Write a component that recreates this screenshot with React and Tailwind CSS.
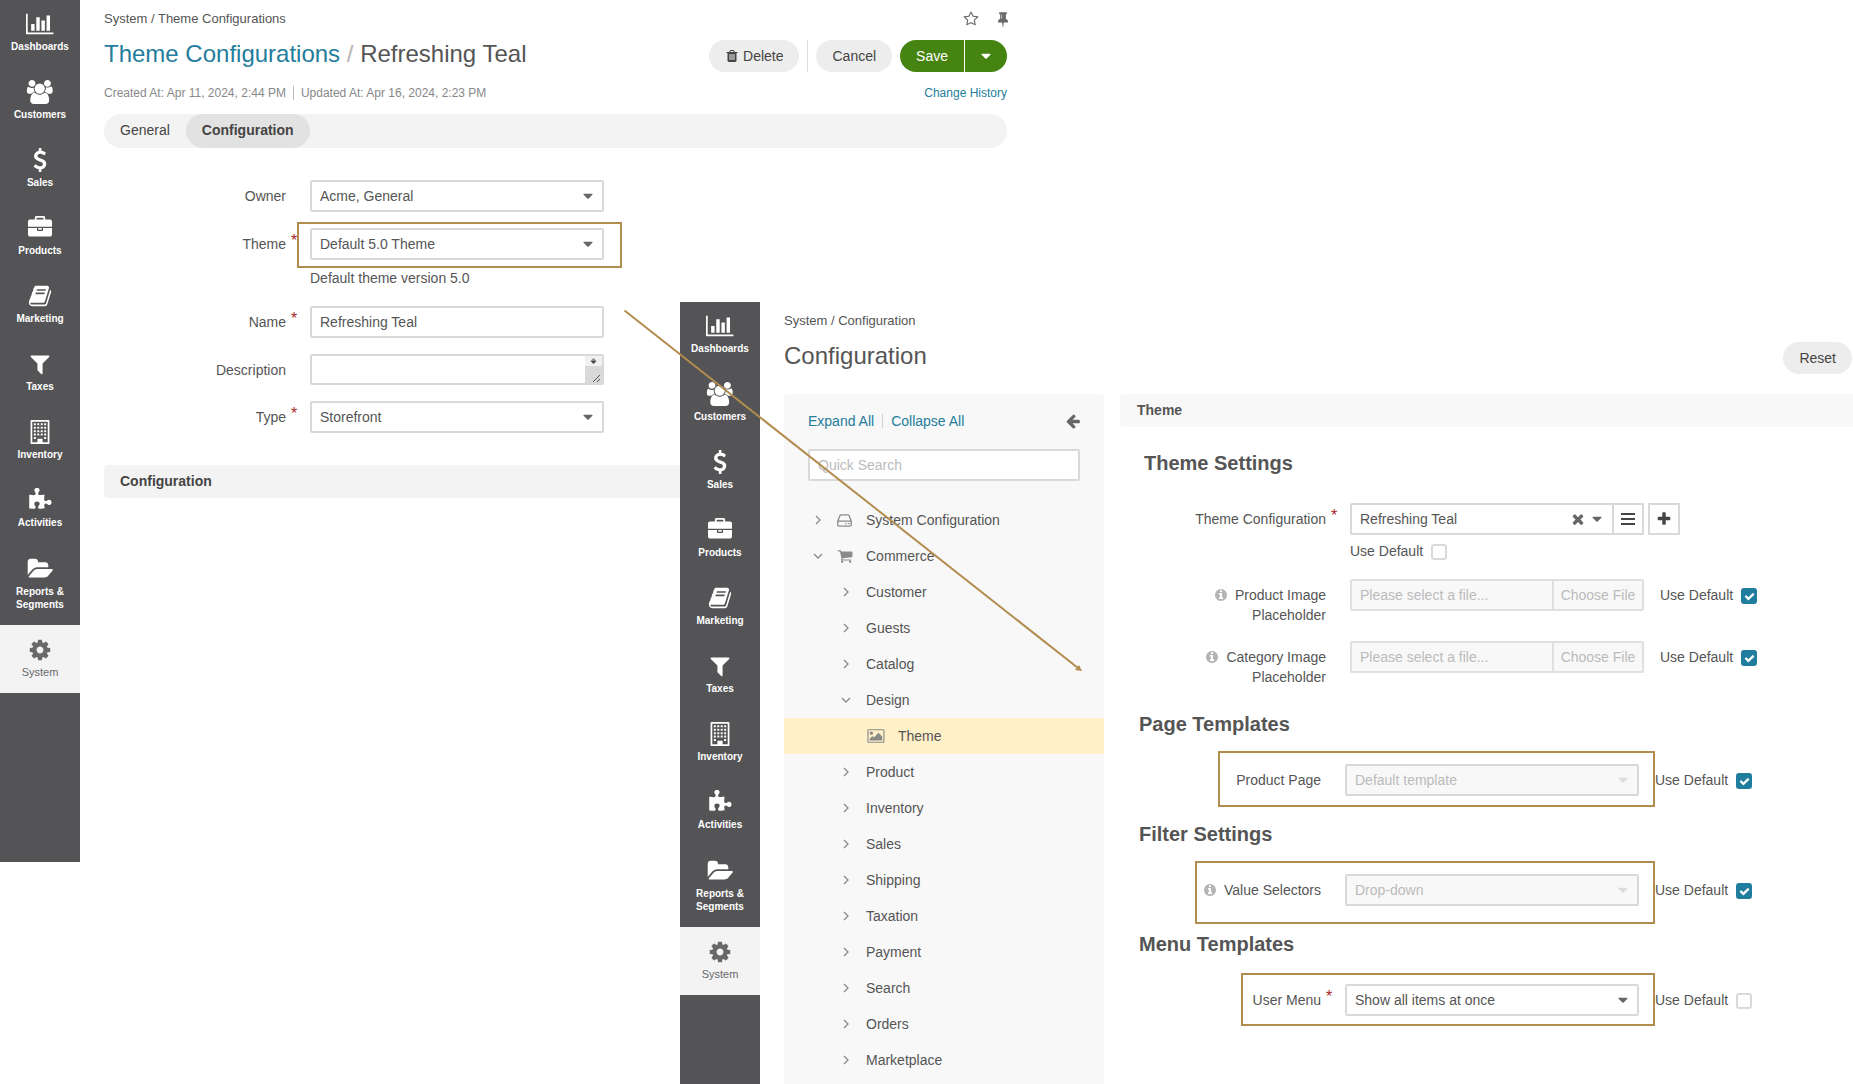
import React from "react";

/* ---------- icons ---------- */

const ICONS = {
  chart: "M640 896v512h-256v-512h256zm384-512v1024h-256v-1024h256zm1024 1152v128h-2048v-1536h128v1408h1920zm-640-896v768h-256v-768h256zm384-384v1152h-256v-1152h256z",
  users: "M657 896q-162 5-265 128h-134q-82 0-138-40.5t-56-118.5q0-353 124-353 6 0 43.5 21t97.5 42.5 119 21.5q67 0 133-23-5 37-5 66 0 159 93 287zm1071 637q0 120-73 189.5t-194 69.5h-874q-121 0-194-69.5t-73-189.5q0-53 3.5-103.5t14-109 26.5-108.5 43-97.5 62-81 85.5-53.5 111.5-20q10 0 43 21.5t73 48 107 48 135 21.5 135-21.5 107-48 73-48 43-21.5q61 0 111.5 20t85.5 53.5 62 81 43 97.5 26.5 108.5 14 109 3.5 103.5zm-1024-1277q0 106-75 181t-181 75-181-75-75-181 75-181 181-75 181 75 75 181zm704 384q0 159-112.5 271.5t-271.5 112.5-271.5-112.5-112.5-271.5 112.5-271.5 271.5-112.5 271.5 112.5 112.5 271.5zm576 225q0 78-56 118.5t-138 40.5h-134q-103-123-265-128 93-128 93-287 0-29-5-66 66 23 133 23 59 0 119-21.5t97.5-42.5 43.5-21q124 0 124 353zm-128-609q0 106-75 181t-181 75-181-75-75-181 75-181 181-75 181 75 75 181z",
  dollar: "M1362 1185q0 153-99.5 263.5t-258.5 136.5v175q0 14-9 23t-23 9h-135q-13 0-22.5-9.5t-9.5-22.5v-175q-66-9-127.5-31t-101.5-44.5-74-48-46.5-37.5-17.5-18q-17-21-2-41l103-135q7-10 23-12 15-2 24 9l2 2q113 99 243 125 37 8 74 8 81 0 142.5-43t61.5-122q0-28-15-53t-33.5-42-58.5-37.5-66-32-80-32.5q-39-16-61.5-25t-61.5-26.5-62.5-31-56.5-35.5-53.5-42.5-43.5-49-35.5-58-21-66.5-8.5-78q0-138 98-242t255-134v-180q0-13 9.5-22.5t22.5-9.5h135q14 0 23 9t9 23v176q57 6 110.5 23t87 33.5 63.5 37.5 39 29 15 14q17 18 5 38l-81 146q-8 15-23 16-14 3-27-7-3-3-14.5-12t-39-26.5-58.5-32-74.5-26-85.5-11.5q-95 0-155 43t-60 111q0 26 8.5 48t29.5 41.5 39.5 33 56 31 60.5 27 70 27.5q53 20 81 31.5t76 35 75.5 42.5 62 50 53 63.5 31.5 76.5 13 94z",
  briefcase: "M640 256h512v-128h-512v128zm1152 640v480q0 66-47 113t-113 47h-1472q-66 0-113-47t-47-113v-480h672v160q0 26 19 45t45 19h320q26 0 45-19t19-45v-160h672zm-768 0v128h-256v-128h256zm768-480v384h-1792v-384q0-66 47-113t113-47h352v-160q0-40 28-68t68-28h576q40 0 68 28t28 68v160h352q66 0 113 47t47 113z",
  book: "M1703 478q40 57 18 129l-275 906q-19 64-76.5 107.5t-122.5 43.5h-923q-77 0-148.5-53.5t-99.5-131.5q-24-67-2-127 0-4 3-27t4-37q1-8-3-21.5t-3-19.5q2-11 8-21t16.5-23.5 16.5-23.5q23-38 45-91.5t30-91.5q3-10 .5-30t-.5-28q3-11 17-28t17-23q21-36 42-92t25-90q1-9-2.5-32t.5-28q4-13 22-30.5t22-22.5q19-26 42.5-84.5t27.5-96.5q1-8-3-25.5t-2-26.5q2-8 9-18t18-23 17-21q8-12 16.5-30.5t15-35 16-36 19.5-32 26.5-23.5 36-11.5 47.5 5.5l-1 3q38-9 51-9h761q74 0 114 56t18 130l-274 906q-36 119-71.5 153.5t-128.5 34.5h-869q-27 0-38 15-11 16-1 43 24 70 144 70h923q29 0 56-15.5t35-41.5l300-987q7-22 5-57 38 15 59 43zm-1064 2q-4 13 2 22.5t20 9.5h608q13 0 25.5-9.5t16.5-22.5l21-64q4-13-2-22.5t-20-9.5h-608q-13 0-25.5 9.5t-16.5 22.5zm-83 256q-4 13 2 22.5t20 9.5h608q13 0 25.5-9.5t16.5-22.5l21-64q4-13-2-22.5t-20-9.5h-608q-13 0-25.5 9.5t-16.5 22.5z",
  filter: "M1595 295q17 41-14 70l-493 493v742q0 42-39 59-13 5-25 5-27 0-45-19l-256-256q-19-19-19-45v-486l-493-493q-31-29-14-70 17-39 59-39h1280q42 0 59 39z",
  puzzle: "M1755 1083q0 81-44.5 135t-123.5 54q-41 0-77.5-17.5t-59-38-56.5-38-71-17.5q-110 0-110 124 0 39 16 115t15 115v5q-22 0-33 1-34 3-97.5 11.5t-115.5 13.5-98 5q-61 0-103-26.5t-42-83.5q0-37 17.5-71t38-56.5 38-59 17.5-77.5q0-79-54-123.5t-135-44.5q-84 0-143 45.5t-59 127.5q0 43 15 83t33.5 64.5 33.5 53 15 50.5q0 45-46 89-37 35-117 35-95 0-245-24-9-2-27.5-4t-27.5-4l-13-2q-1 0-3-1-2 0-2-1v-1024q2 1 17.5 3.5t34 5 21.5 3.5q150 24 245 24 80 0 117-35 46-44 46-89 0-22-15-50.5t-33.5-53-33.5-64.5-15-83q0-82 59-127.5t144-45.5q80 0 134 44.5t54 123.5q0 41-17.5 77.5t-38 59-38 56.5-17.5 71q0 57 42 83.5t103 26.5q64 0 180-15t163-17v2q-1 2-3.5 17.5t-5 34-3.5 21.5q-24 150-24 245 0 80 35 117 44 46 89 46 22 0 50.5-15t53-33.5 64.5-33.5 83-15q82 0 127.5 59t45.5 143z",
  folder: "M1943 952q0 31-31 66l-336 396q-43 51-120.5 86.5t-143.5 35.5h-1088q-34 0-60.5-13t-26.5-43q0-31 31-66l336-396q43-51 120.5-86.5t143.5-35.5h1088q34 0 60.5 13t26.5 43zm-343-344v160h-832q-94 0-197 47.5t-164 119.5l-337 396-5 6q0-4-.5-12.5t-.5-12.5v-960q0-92 66-158t158-66h320q92 0 158 66t66 158v32h544q92 0 158 66t66 158z",
  cog: "M1152 896q0-106-75-181t-181-75-181 75-75 181 75 181 181 75 181-75 75-181zm512-109v222q0 12-8 23t-20 13l-185 28q-19 54-39 91 35 50 107 138 10 12 10 25t-9 23q-27 37-99 108t-94 71q-12 0-26-9l-138-108q-44 23-91 38-16 136-29 186-7 28-36 28h-222q-14 0-24.5-8.5t-11.5-21.5l-28-184q-49-16-90-37l-141 107q-10 9-25 9-14 0-25-11-126-114-165-168-7-10-7-23 0-12 8-23 15-21 51-66.5t54-70.5q-27-50-41-99l-183-27q-13-2-21-12.5t-8-23.5v-222q0-12 8-23t19-13l186-28q14-46 39-92-40-57-107-138-10-12-10-24 0-10 9-23 26-36 98.5-107.5t94.5-71.5q13 0 26 10l138 107q44-23 91-38 16-136 29-186 7-28 36-28h222q14 0 24.5 8.5t11.5 21.5l28 184q49 16 90 37l142-107q9-9 24-9 13 0 25 10 129 119 165 170 7 8 7 22 0 12-8 23-15 21-51 66.5t-54 70.5q26 50 41 98l183 28q13 2 21 12.5t8 23.5z",
  cart: "M704 1536q0 52-38 90t-90 38-90-38-38-90 38-90 90-38 90 38 38 90zm896 0q0 52-38 90t-90 38-90-38-38-90 38-90 90-38 90 38 38 90zm128-1088v512q0 24-16.5 42.5t-40.5 21.5l-1044 122q13 60 13 70 0 16-24 64h920q26 0 45 19t19 45-19 45-45 19h-1024q-26 0-45-19t-19-45q0-11 8-31.5t16-36 21.5-40 15.5-29.5l-177-823h-204q-26 0-45-19t-19-45 19-45 45-19h256q16 0 28.5 6.5t19.5 15.5 13 24.5 8 26 5.5 29.5 4.5 26h1201q26 0 45 19t19 45z",
  star: "M1201 1004l306-297-422-62-189-382-189 382-422 62 306 297-73 421 378-199 377 199zm527-357q0 22-26 48l-363 354 86 500q1 7 1 20 0 50-41 50-19 0-40-12l-449-236-449 236q-22 12-40 12-21 0-31.5-14.5t-10.5-35.5q0-6 2-20l86-500-364-354q-25-27-25-48 0-37 56-46l502-73 225-455q19-41 49-41t49 41l225 455 502 73q56 9 56 46z",
  pin: "M800 864v-448q0-14-9-23t-23-9-23 9-9 23v448q0 14 9 23t23 9 23-9 9-23zm672 352q0 26-19 45t-45 19h-429l-51 483q-2 12-10.5 20.5t-20.5 8.5h-1q-27 0-32-27l-76-485h-404q-26 0-45-19t-19-45q0-123 78.5-221.5t177.5-98.5v-512q-52 0-90-38t-38-90 38-90 90-38h640q52 0 90 38t38 90-38 90-90 38v512q99 0 177.5 98.5t78.5 221.5z",
  trash: "M704 1376v-704q0-14-9-23t-23-9h-64q-14 0-23 9t-9 23v704q0 14 9 23t23 9h64q14 0 23-9t9-23zm256 0v-704q0-14-9-23t-23-9h-64q-14 0-23 9t-9 23v704q0 14 9 23t23 9h64q14 0 23-9t9-23zm256 0v-704q0-14-9-23t-23-9h-64q-14 0-23 9t-9 23v704q0 14 9 23t23 9h64q14 0 23-9t9-23zm-544-992h448l-48-117q-7-9-17-11h-317q-10 2-17 11zm928 32v64q0 14-9 23t-23 9h-96v948q0 83-47 143.5t-113 60.5h-832q-66 0-113-58.5t-47-141.5v-952h-96q-14 0-23-9t-9-23v-64q0-14 9-23t23-9h309l70-167q15-37 54-63t79-26h320q40 0 79 26t54 63l70 167h309q14 0 23 9t9 23z",
  arrowLeft: "M1664 896v128q0 53-32.5 90.5t-84.5 37.5h-704l293 294q38 36 38 90t-38 90l-75 76q-37 37-90 37-52 0-91-37l-651-652q-37-37-37-90 0-52 37-91l651-650q38-38 91-38 52 0 90 38l75 74q38 38 38 91t-38 91l-293 293h704q52 0 84.5 37.5t32.5 90.5z",
  info: "M1152 1376v-160q0-14-9-23t-23-9h-96v-512q0-14-9-23t-23-9h-320q-14 0-23 9t-9 23v160q0 14 9 23t23 9h96v320h-96q-14 0-23 9t-9 23v160q0 14 9 23t23 9h448q14 0 23-9t9-23zm-128-896v-160q0-14-9-23t-23-9h-192q-14 0-23 9t-9 23v160q0 14 9 23t23 9h192q14 0 23-9t9-23zm640 416q0 209-103 385.5t-279.5 279.5-385.5 103-385.5-103-279.5-279.5-103-385.5 103-385.5 279.5-279.5 385.5-103 385.5 103 279.5 279.5 103 385.5z",
  times: "M1490 1322q0 40-28 68l-136 136q-28 28-68 28t-68-28l-294-294-294 294q-28 28-68 28t-68-28l-136-136q-28-28-28-68t28-68l294-294-294-294q-28-28-28-68t28-68l136-136q28-28 68-28t68 28l294 294 294-294q28-28 68-28t68 28l136 136q28 28 28 68t-28 68l-294 294 294 294q28 28 28 68z",
  plus: "M1600 736v192q0 40-28 68t-68 28h-416v416q0 40-28 68t-68 28h-192q-40 0-68-28t-28-68v-416h-416q-40 0-68-28t-28-68v-192q0-40 28-68t68-28h416v-416q0-40 28-68t68-28h192q40 0 68 28t28 68v416h416q40 0 68 28t28 68z",
  check: "M1671 566q0 40-28 68l-724 724-136 136q-28 28-68 28t-68-28l-136-136-362-362q-28-28-28-68t28-68l136-136q28-28 68-28t68 28l294 295 656-657q28-28 68-28t68 28l136 136q28 28 28 68z",
  image: "M576 576q0 80-56 136t-136 56-136-56-56-136 56-136 136-56 136 56 56 136zm1024 384v448h-1408v-192l320-320 160 160 512-512zm96-704h-1600q-13 0-22.5 9.5t-9.5 22.5v1216q0 13 9.5 22.5t22.5 9.5h1600q13 0 22.5-9.5t9.5-22.5v-1216q0-13-9.5-22.5t-22.5-9.5zm160 32v1216q0 66-47 113t-113 47h-1600q-66 0-113-47t-47-113v-1216q0-66 47-113t113-47h1600q66 0 113 47t47 113z",
  caret: "M1408 704q0 26-19 45l-448 448q-19 19-45 19t-45-19l-448-448q-19-19-19-45t19-45 45-19h896q26 0 45 19t19 45z",
};

const VIEWBOX = {
  chart: "0 0 2048 1792",
  users: "0 0 2048 1792",
  folder: "-64 0 2048 1792",
  image: "-64 0 2048 1792",
};

function Icon({ name, className }) {
  return (
    <svg viewBox={VIEWBOX[name] || "0 0 1792 1792"} fill="currentColor" aria-hidden="true" className={className}>
      <path d={ICONS[name]} />
    </svg>
  );
}

function BuildingIcon({ className }) {
  const cols = [448, 704, 960, 1216];
  const windows = [256, 512, 768, 1024].flatMap((y) => cols.map((x) => [x, y]));
  windows.push([448, 1280], [1216, 1280]);
  return (
    <svg viewBox="0 0 1792 1792" fill="currentColor" aria-hidden="true" className={className}>
      <path fillRule="evenodd" d="M256 0h1280q64 0 64 64v1664q0 64-64 64H256q-64 0-64-64V64q0-64 64-64zM320 128v1536h384v-256h384v256h384V128z" />
      {windows.map(([x, y]) => (
        <rect key={`${x}-${y}`} x={x - 12} y={y - 12} width="152" height="152" rx="24" />
      ))}
    </svg>
  );
}

function DriveIcon({ className }) {
  return (
    <svg viewBox="0 0 15 13" fill="none" stroke="currentColor" strokeLinejoin="round" aria-hidden="true" className={className}>
      <path d="M.75 7.25 3 1.5Q3.2.9 4 .9h7q.8 0 1 .6l2.25 5.75v3.6q0 1.2-1.2 1.2H2q-1.2 0-1.2-1.2zM.75 7.1h13.5" strokeWidth="1.3" />
      <path d="M8.3 9.6h1.4M11.2 9.6h1.4" strokeWidth="1.4" />
    </svg>
  );
}

function Chevron({ open }) {
  return (
    <svg viewBox="0 0 10 10" fill="none" stroke="currentColor" strokeWidth="1.3" aria-hidden="true" className="size-2.5 text-[#8a8a8a]">
      <path d={open ? "M1 3l4 4 4-4" : "M3 1l4 4-4 4"} />
    </svg>
  );
}

/* ---------- shared pieces ---------- */

const NAV = [
  ["Dashboards", "chart"],
  ["Customers", "users"],
  ["Sales", "dollar"],
  ["Products", "briefcase"],
  ["Marketing", "book"],
  ["Taxes", "filter"],
  ["Inventory", "building"],
  ["Activities", "puzzle"],
];

function NavIcon({ name }) {
  if (name === "building") return <BuildingIcon className="h-6 w-auto" />;
  return <Icon name={name} className="h-6 w-auto" />;
}

function Sidebar({ className }) {
  return (
    <nav aria-label="Main" className={`w-20 shrink-0 bg-[#545456] text-center text-[10px] leading-[13px] font-bold text-white ${className}`}>
      {NAV.map(([label, icon]) => (
        <a key={label} href="#" className="flex h-[68px] flex-col items-center gap-1 pt-3">
          <NavIcon name={icon} />
          {label}
        </a>
      ))}
      <a href="#" className="flex h-[81px] flex-col items-center gap-1 px-3 pt-[13px]">
        <NavIcon name="folder" />
        Reports &amp; Segments
      </a>
      <a href="#" aria-current="page" className="flex h-[68px] flex-col items-center gap-1 bg-[#f3f3f3] pt-[13px] text-[11px] font-normal text-[#69696b]">
        <NavIcon name="cog" />
        System
      </a>
    </nav>
  );
}

function PillButton({ children }) {
  return (
    <button type="button" className="flex h-8 items-center gap-1 rounded-full bg-[#ededed] px-4 text-[#444]">
      {children}
    </button>
  );
}

function Label({ htmlFor, required, info, children }) {
  return (
    <>
      <label htmlFor={htmlFor} className="w-[182px] shrink-0 pt-1.5 text-right leading-5">
        {info && <Icon name="info" className="mr-[7px] -mt-0.5 inline size-3.5 text-[#b5b5b5]" />}
        {children}
      </label>
      <span className="w-6 shrink-0 pl-[5px] text-base leading-[26px] text-[#a92a2a]">{required ? "*" : ""}</span>
    </>
  );
}

function Select({ id, value, disabled }) {
  return (
    <div className="relative w-[294px] shrink-0">
      <select
        id={id}
        disabled={disabled}
        className="h-8 w-full appearance-none rounded-xs border-2 border-[#d9d9d9] bg-white px-2 text-[#555] disabled:bg-[#f8f8f8] disabled:text-[#bbb] disabled:opacity-100"
      >
        <option>{value}</option>
      </select>
      <Icon name="caret" className={`pointer-events-none absolute top-2 right-2 size-4 ${disabled ? "text-[#dcdcdc]" : "text-[#666]"}`} />
    </div>
  );
}

function Highlight({ className }) {
  return <div className={`pointer-events-none absolute border-2 border-[#b38c4f] ${className}`} />;
}

function UseDefault({ id, checked }) {
  return (
    <div className="flex h-5 items-center gap-2">
      <label htmlFor={id}>Use Default</label>
      <span className="relative mt-0.5 flex size-4">
        <input
          id={id}
          type="checkbox"
          defaultChecked={checked}
          className="peer size-4 appearance-none rounded-[3px] border-2 border-[#d9d9d9] bg-white checked:border-[#207d9e] checked:bg-[#207d9e]"
        />
        <Icon name="check" className="pointer-events-none absolute inset-0 m-auto hidden size-[11px] text-white peer-checked:block" />
      </span>
    </div>
  );
}

/* ---------- theme configuration window ---------- */

function ThemeConfigurationWindow() {
  return (
    <div className="mr-[846px] flex">
      <Sidebar className="h-[862px]" />
      <main className="min-w-0 flex-1 pl-6">
        <div className="flex h-[38px] items-center justify-between text-[13px]">
          <div>System / Theme Configurations</div>
          <div className="flex items-center gap-4 text-[#69696b]">
            <button type="button" aria-label="Favorite"><Icon name="star" className="size-4" /></button>
            <button type="button" aria-label="Pin"><Icon name="pin" className="-mr-1 size-4" /></button>
          </div>
        </div>
        <div className="flex items-start justify-between">
          <h1 className="text-2xl leading-8">
            <a href="#" className="text-[#247d9c]">Theme Configurations</a>
            <span className="text-[#b5b5b5]"> / </span>
            Refreshing Teal
          </h1>
          <div className="flex gap-2 pt-0.5">
            <PillButton>
              <Icon name="trash" className="size-3.5" />
              Delete
            </PillButton>
            <div className="w-px bg-[#ddd]" />
            <PillButton>Cancel</PillButton>
            <div className="flex h-8 gap-px overflow-hidden rounded-full">
              <button type="button" className="bg-[#468412] px-4 text-white">Save</button>
              <button type="button" aria-label="More save options" className="flex w-[42px] items-center justify-center bg-[#468412] text-white">
                <Icon name="caret" className="size-4" />
              </button>
            </div>
          </div>
        </div>
        <div className="mt-[11px] flex h-5 items-center justify-between text-xs text-[#888]">
          <div className="flex items-center gap-[7px]">
            <span>Created At: Apr 11, 2024, 2:44 PM</span>
            <span className="h-3.5 w-px bg-[#bbb]" />
            <span>Updated At: Apr 16, 2024, 2:23 PM</span>
          </div>
          <a href="#" className="text-[#247d9c]">Change History</a>
        </div>
        <div role="tablist" className="mt-[11px] flex h-[34px] rounded-full bg-[#f3f3f3] text-[#444]">
          <button type="button" role="tab" aria-selected="false" className="px-4 pb-0.5">General</button>
          <button type="button" role="tab" aria-selected="true" className="rounded-full bg-[#e2e2e2] px-4 pb-0.5 font-bold">Configuration</button>
        </div>
        <form className="pt-8">
          <div className="flex">
            <Label htmlFor="owner">Owner</Label>
            <Select id="owner" value="Acme, General" />
          </div>
          <div className="mt-4 flex">
            <Label htmlFor="theme" required>Theme</Label>
            <div>
              <div className="relative">
                <Select id="theme" value="Default 5.0 Theme" />
                <Highlight className="-top-1.5 -right-[18px] -bottom-2 -left-[13px]" />
              </div>
              <p className="mt-2 leading-5">Default theme version 5.0</p>
            </div>
          </div>
          <div className="mt-[18px] flex">
            <Label htmlFor="name" required>Name</Label>
            <input id="name" defaultValue="Refreshing Teal" className="h-8 w-[294px] rounded-xs border-2 border-[#d9d9d9] bg-white px-2" />
          </div>
          <div className="mt-4 flex">
            <Label htmlFor="description">Description</Label>
            <div className="relative flex">
              <textarea id="description" className="h-[31px] w-[294px] resize-none overflow-hidden rounded-xs border-2 border-[#d9d9d9] bg-white px-2" />
              <svg viewBox="0 0 17 27" aria-hidden="true" className="pointer-events-none absolute top-0.5 right-0.5 h-[27px] w-[17px]">
                <rect width="17" height="10" fill="#f1f1f1" />
                <rect y="10" width="17" height="17" fill="#d9d9d9" />
                <path d="M5.5 5 8.5 2l3 3z" fill="#8a8a8a" />
                <path d="M5.5 5h6l-3 3z" fill="#444" />
                <path d="m8 26 7-7M12 26l3-3" stroke="#555" fill="none" />
              </svg>
            </div>
          </div>
          <div className="mt-4 flex">
            <Label htmlFor="type" required>Type</Label>
            <Select id="type" value="Storefront" />
          </div>
        </form>
        <h2 className="mt-8 rounded-sm bg-[#f3f3f3] px-4 py-1.5 leading-[21px] font-bold text-[#444]">Configuration</h2>
      </main>
    </div>
  );
}

/* ---------- system configuration window ---------- */

const TREE = [
  "Customer",
  "Guests",
  "Catalog",
  "Design",
  "Theme",
  "Product",
  "Inventory",
  "Sales",
  "Shipping",
  "Taxation",
  "Payment",
  "Search",
  "Orders",
  "Marketplace",
];

function ConfigTree() {
  return (
    <aside className="w-80 shrink-0 rounded-t-sm bg-[#f8f8f8]">
      <div className="flex items-center pt-[17px] pr-[23px] pl-6 leading-5 text-[#247d9c]">
        <a href="#">Expand All</a>
        <span className="mx-2 h-3.5 w-px bg-[#d0d0d0]" />
        <a href="#">Collapse All</a>
        <button type="button" aria-label="Collapse panel" className="ml-auto text-[#666]">
          <Icon name="arrowLeft" className="size-4" />
        </button>
      </div>
      <div className="px-6 pt-[18px]">
        <input type="search" aria-label="Quick Search" placeholder="Quick Search" className="h-8 w-full rounded-xs border-2 border-[#d9d9d9] bg-white px-2 placeholder:text-[#bbb]" />
      </div>
      <ul className="mt-[21px] leading-9">
        <li className="flex items-center pl-[29px]">
          <Chevron />
          <DriveIcon className="ml-3.5 h-[13px] w-[15px] text-[#8a8a8a]" />
          <a href="#" className="ml-3.5">System Configuration</a>
        </li>
        <li className="flex items-center pl-[29px]">
          <Chevron open />
          <Icon name="cart" className="ml-3.5 size-4 text-[#8a8a8a]" />
          <a href="#" className="ml-[13px]">Commerce</a>
        </li>
        {TREE.map((label) =>
          label === "Theme" ? (
            <li key={label} className="flex items-center bg-[#fff0c8] pl-[83px]">
              <Icon name="image" className="h-4 w-[19px] text-[#8a8a8a]" />
              <a href="#" aria-current="true" className="ml-3">{label}</a>
            </li>
          ) : (
            <li key={label} className="flex items-center pl-[57px]">
              <Chevron open={label === "Design"} />
              <a href="#" className="ml-[15px]">{label}</a>
            </li>
          )
        )}
      </ul>
    </aside>
  );
}

function SectionTitle({ children, className }) {
  return <h2 className={`mb-[26px] text-xl leading-7 font-bold ${className}`}>{children}</h2>;
}

function FileRow({ id, label, className }) {
  return (
    <div className={`flex ${className}`}>
      <Label htmlFor={id} info>{label}</Label>
      <div className="flex h-8 w-[294px] shrink-0">
        <input id={id} disabled placeholder="Please select a file..." className="w-0 flex-1 rounded-l-xs border-2 border-[#e0e0e0] bg-[#f8f8f8] px-2 placeholder:text-[#bbb]" />
        <button type="button" disabled className="-ml-0.5 w-[92px] rounded-r-xs border-2 border-[#e0e0e0] bg-[#f8f8f8] text-[#bbb]">Choose File</button>
      </div>
      <div className="pt-1.5 pl-4"><UseDefault id={`${id}-default`} checked /></div>
    </div>
  );
}

function SelectRow({ id, label, value, info, required, disabled, box }) {
  return (
    <div className="flex">
      <Label htmlFor={id} info={info} required={required}>{label}</Label>
      <div className="relative h-8">
        <Select id={id} value={value} disabled={disabled} />
        <Highlight className={box} />
      </div>
      <div className="pt-1.5 pl-4"><UseDefault id={`${id}-default`} checked={disabled} /></div>
    </div>
  );
}

function SystemConfigurationWindow() {
  const squareButton = "flex size-8 items-center justify-center border-2 border-[#d9d9d9] bg-white text-[#444]";
  return (
    <div className="absolute top-[302px] right-0 bottom-0 left-[680px] flex bg-white">
      <Sidebar className="" />
      <main className="flex min-w-0 flex-1 flex-col pl-6">
        <div className="flex h-[38px] items-center text-[13px]">System / Configuration</div>
        <div className="flex items-start justify-between pr-px">
          <h1 className="text-2xl leading-8">Configuration</h1>
          <div className="pt-0.5"><PillButton>Reset</PillButton></div>
        </div>
        <div className="mt-5 flex flex-1 gap-4">
          <ConfigTree />
          <div className="min-w-0 flex-1">
            <h2 className="rounded-l-sm bg-[#f8f8f8] px-[17px] py-1.5 leading-[21px] font-bold">Theme</h2>
            <form>
              <div className="pl-6">
                <SectionTitle className="mt-[22px]">Theme Settings</SectionTitle>
                <div className="flex">
                  <Label htmlFor="theme-configuration" required>Theme Configuration</Label>
                  <div>
                    <div className="flex">
                      <div className="relative w-[264px]">
                        <select id="theme-configuration" className="h-8 w-full appearance-none rounded-l-xs border-2 border-[#d9d9d9] bg-white px-2">
                          <option>Refreshing Teal</option>
                        </select>
                        <button type="button" aria-label="Clear" className="absolute top-2 right-7 text-[#666]">
                          <Icon name="times" className="size-4" />
                        </button>
                        <Icon name="caret" className="pointer-events-none absolute top-2 right-[9px] size-4 text-[#666]" />
                      </div>
                      <button type="button" aria-label="Choose from list" className={`-ml-0.5 ${squareButton}`}>
                        <svg viewBox="0 0 14 12" aria-hidden="true" className="h-3 w-3.5" fill="currentColor">
                          <path d="M0 0h14v2H0zM0 5h14v2H0zM0 10h14v2H0z" />
                        </svg>
                      </button>
                      <button type="button" aria-label="Create" className={`ml-1 ${squareButton}`}>
                        <Icon name="plus" className="size-4" />
                      </button>
                    </div>
                    <div className="pt-1.5"><UseDefault id="theme-configuration-default" /></div>
                  </div>
                </div>
                <FileRow id="product-image" label="Product Image Placeholder" className="mt-[18px]" />
                <FileRow id="category-image" label="Category Image Placeholder" className="mt-4" />
              </div>
              <div className="pl-[19px]">
                <SectionTitle className="mt-[23px]">Page Templates</SectionTitle>
                <SelectRow id="product-page" label="Product Page" value="Default template" disabled box="-top-[13px] -right-4 -bottom-[11px] -left-[127px]" />
                <SectionTitle className="mt-6">Filter Settings</SectionTitle>
                <SelectRow id="value-selectors" label="Value Selectors" value="Drop-down" info disabled box="-top-[13px] -right-4 -bottom-[18px] -left-[150px]" />
                <SectionTitle className="mt-6">Menu Templates</SectionTitle>
                <SelectRow id="user-menu" label="User Menu" value="Show all items at once" required box="-top-[11px] -right-4 -bottom-2.5 -left-[104px]" />
              </div>
            </form>
          </div>
        </div>
      </main>
    </div>
  );
}

/* Callout arrow leading from the theme field to the configuration form */
function CalloutArrow() {
  return (
    <svg viewBox="0 0 460 364" aria-hidden="true" className="pointer-events-none absolute top-[309px] left-[623px] h-[364px] w-[460px]">
      <path d="M1.5 1.5 455 359" stroke="#b38c4f" strokeWidth="2" fill="none" />
      <path d="m459 362-7-1 4-5z" fill="#b38c4f" />
    </svg>
  );
}

export default function App() {
  return (
    <div className="relative h-screen overflow-hidden bg-white font-['Liberation_Sans',Arial,sans-serif] text-sm text-[#555]">
      <ThemeConfigurationWindow />
      <SystemConfigurationWindow />
      <CalloutArrow />
    </div>
  );
}
